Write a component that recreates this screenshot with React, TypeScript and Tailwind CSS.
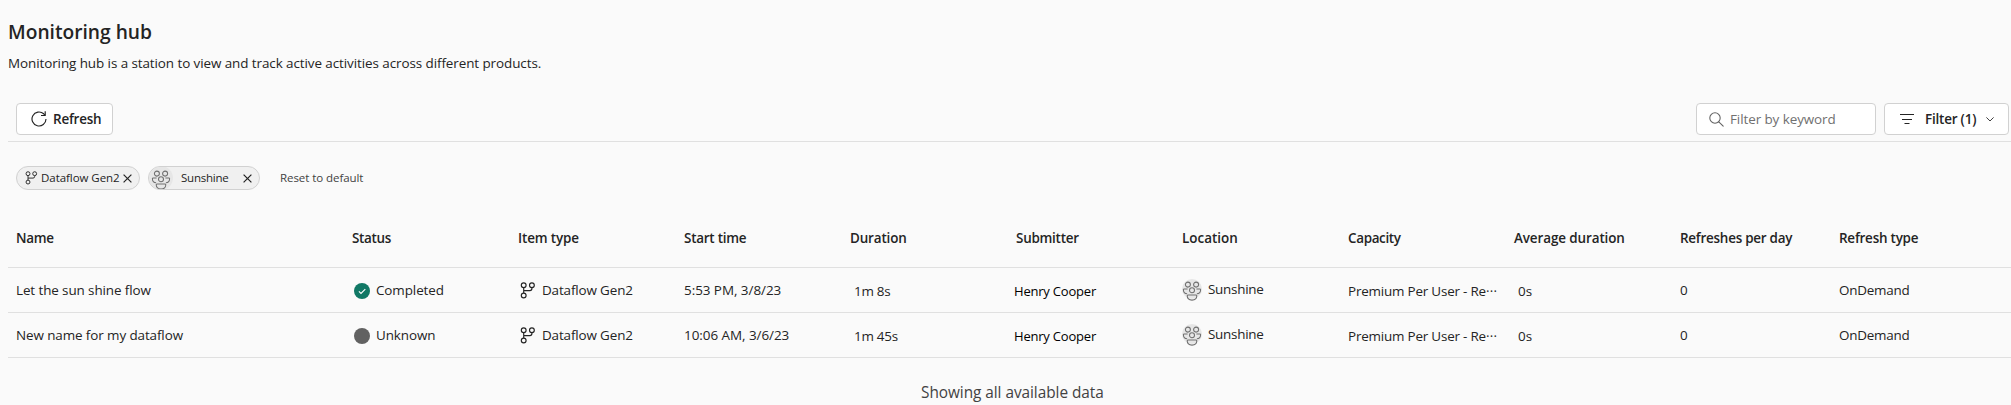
import React from 'react';

type IconProps = { className?: string };

const BranchIcon = ({ className = '' }: IconProps) => (
  <svg viewBox="0 0 16 17" className={className} fill="none" stroke="#242424" strokeWidth="1.15">
    <circle cx="3.7" cy="3.2" r="2.4" />
    <circle cx="11.9" cy="3.2" r="2.4" />
    <circle cx="3.7" cy="13.5" r="2.4" />
    <path d="M3.7 5.6v5.5M11.9 5.6v1a2 2 0 0 1-2 2H3.7" />
  </svg>
);

const PeopleIcon = ({ className = '' }: IconProps) => (
  <svg viewBox="0 0 20 22" className={className} fill="none" stroke="#707070" strokeWidth="1.05">
    <circle cx="5.9" cy="5.6" r="2.5" />
    <circle cx="14.1" cy="5.6" r="2.5" />
    <circle cx="10" cy="11.2" r="2.5" />
    <path d="M5.6 9.9H2.2c-.5 0-.8.3-.8.8 0 2.200 1.300 3.800 3.700 4.100M14.400 9.900h3.400c.5 0 .8.3.8.8 0 2.200-1.300 3.800-3.700 4.100" />
    <path d="M6.200 15.900h7.600c.6 0 1 .4 1 .9 0 2.600-2 4.300-4.800 4.300s-4.800-1.700-4.800-4.300c0-.5.4-.9 1-.9z" />
  </svg>
);

const CloseIcon = () => (
  <svg viewBox="0 0 9 9" className="h-[9px] w-[9px]" fill="none" stroke="#242424" strokeWidth="1.2">
    <path d="M.6.6l7.800 7.800M8.400.6L.6 8.400" />
  </svg>
);

const RefreshIcon = () => (
  <svg viewBox="0 0 16 16" className="h-4 w-4" fill="none" stroke="#242424" strokeWidth="1.15">
    <path d="M15 8a7 7 0 1 1-2.300-5.200l1.300 1.300" />
    <path d="M14.200.3v4.200h-4.200" />
  </svg>
);

const SearchIcon = () => (
  <svg viewBox="0 0 15 15" className="h-[15px] w-[15px]" fill="none" stroke="#616161" strokeWidth="1.05">
    <circle cx="6" cy="6" r="5.2" />
    <path d="M9.800 9.800l4.400 4.400" strokeLinecap="round" />
  </svg>
);

const FilterIcon = () => (
  <svg viewBox="0 0 14 10" className="h-[10px] w-[14px]" fill="none" stroke="#242424" strokeWidth="1.1">
    <path d="M0 .5h14M2 5.500h10M4.500 9.500h5" />
  </svg>
);

const ChevronIcon = () => (
  <svg viewBox="0 0 8 5" className="h-[5px] w-2" fill="none" stroke="#424242" strokeWidth="1">
    <path d="M.4.4L4 4 7.600.4" />
  </svg>
);

const CompletedIcon = () => (
  <svg viewBox="0 0 16 16" className="h-4 w-4">
    <circle cx="8" cy="8" r="8" fill="#117865" />
    <path d="M4.900 8.300l2.100 2.100 4.300-4.300" fill="none" stroke="#fff" strokeWidth="1.1" />
  </svg>
);

const columns = [
  { label: 'Name', tracking: 'tracking-[-0.29px]' },
  { label: 'Status', tracking: 'tracking-[-0.3px]' },
  { label: 'Item type', tracking: 'tracking-[-0.13px]' },
  { label: 'Start time', tracking: 'tracking-[-0.24px]' },
  { label: 'Duration', tracking: 'tracking-[-0.14px]' },
  { label: 'Submitter', tracking: 'tracking-[-0.25px]' },
  { label: 'Location', tracking: 'tracking-[0px]' },
  { label: 'Capacity', tracking: 'tracking-[-0.34px]' },
  { label: 'Average duration', tracking: 'tracking-[-0.1px]' },
  { label: 'Refreshes per day', tracking: 'tracking-[-0.24px]' },
  { label: 'Refresh type', tracking: 'tracking-[-0.22px]' },
];

const rows = [
  { name: 'Let the sun shine flow', status: 'Completed', start: '5:53 PM, 3/8/23', duration: '1m 8s' },
  { name: 'New name for my dataflow', status: 'Unknown', start: '10:06 AM, 3/6/23', duration: '1m 45s' },
];

const grid = 'grid grid-cols-[336px_repeat(8,166px)_159px_1fr] items-center pl-2';

export default function App() {
  return (
    <div className="h-[405px] overflow-hidden bg-[#fafafa] pl-2 font-['Open_Sans','Noto_Sans',sans-serif] text-[13.44px] leading-5 whitespace-nowrap text-[#242424]">
      <header className="h-[103px] pt-[18px]">
        <h1 className="text-[19.2px] leading-7 font-semibold">Monitoring hub</h1>
        <p className="mt-[7px] tracking-[-0.08px]">
          Monitoring hub is a station to view and track active activities across different products.
        </p>
      </header>

      <div className="flex h-[39px] items-start justify-between border-b border-[#e0e0e0] pr-[2px] pl-2">
        <button className="flex h-8 w-[97px] items-center rounded-[4px] border border-[#d1d1d1] bg-white pl-[14px] font-semibold tracking-[-0.2px]">
          <RefreshIcon />
          <span className="ml-[6px]">Refresh</span>
        </button>
        <div className="flex gap-2">
          <div className="flex h-8 w-[180px] items-center rounded-[4px] border border-[#d1d1d1] bg-white pl-3 tracking-[-0.08px] text-[#707070]">
            <SearchIcon />
            <span className="ml-[6px]">Filter by keyword</span>
          </div>
          <button className="flex h-8 w-[125px] items-center rounded-[4px] border border-[#d1d1d1] bg-white pl-[15px] font-semibold tracking-[-0.2px]">
            <FilterIcon />
            <span className="ml-[11px]">Filter (1)</span>
            <span className="ml-[10px]"><ChevronIcon /></span>
          </button>
        </div>
      </div>

      <div className="flex h-[72px] items-start pt-6 pl-2 text-[11.52px]">
        <div className="flex h-6 w-[124px] items-center rounded-full border border-[#d1d1d1] bg-[#f0f0f0] pl-2">
          <BranchIcon className="h-[14px] w-[13px]" />
          <span className="ml-[3px] w-[82px] tracking-[-0.06px]">Dataflow Gen2</span>
          <CloseIcon />
        </div>
        <div className="ml-2 flex h-6 w-28 items-center overflow-hidden rounded-full border border-[#d1d1d1] bg-[#f0f0f0]">
          <span className="flex h-6 w-6 items-end justify-center rounded-full bg-[#e6e6e6]">
            <PeopleIcon className="h-[22px] w-5" />
          </span>
          <span className="ml-2 w-[62px] tracking-[-0.25px]">Sunshine</span>
          <CloseIcon />
        </div>
        <span className="mt-[2px] ml-5 tracking-[-0.07px] text-[#424242]">Reset to default</span>
      </div>

      <div className={`${grid} h-[53px] pb-[5px] font-semibold`}>
        {columns.map((c) => (
          <div key={c.label} className={c.tracking}>{c.label}</div>
        ))}
      </div>

      {rows.map((r) => (
        <div key={r.name} className={`${grid} h-[45px] border-t border-[#e0e0e0]`}>
          <div className="tracking-[-0.1px]">{r.name}</div>
          <div className="flex items-center pl-[2px] tracking-[-0.09px]">
            <span className="mt-[2px] mr-[6px]">
              {r.status === 'Completed' ? <CompletedIcon /> : <span className="block h-4 w-4 rounded-full bg-[#616161]" />}
            </span>
            {r.status}
          </div>
          <div className="flex items-center pl-[2px] tracking-[-0.14px]">
            <BranchIcon className="mt-px mr-[6px] h-[17px] w-4" />
            Dataflow Gen2
          </div>
          <div className="tracking-[-0.04px]">{r.start}</div>
          <div className="pt-[2px] pl-1 tracking-[-0.25px]">{r.duration}</div>
          <div className="-ml-[2px] pt-px text-[13px] tracking-[-0.2px] text-black">Henry Cooper</div>
          <div className="flex items-center tracking-[-0.26px]">
            <span className="mr-[6px] mb-[2px] h-5 w-5 rounded-full bg-[#e6e6e6]">
              <PeopleIcon className="h-[22px] w-5" />
            </span>
            <span className="-mt-[2px]">Sunshine</span>
          </div>
          <div className="flex pt-[2px] tracking-[-0.2px]">
            Premium Per User - Re<span className="tracking-[0.3px]">···</span>
          </div>
          <div className="pt-[2px] pl-1">0s</div>
          <div>0</div>
          <div className="tracking-[-0.22px]">OnDemand</div>
        </div>
      ))}

      <div className="border-t border-[#e0e0e0] pt-[25px] pl-[913px] text-[15.36px] tracking-[-0.04px] text-[#424242]">
        Showing all available data
      </div>
    </div>
  );
}
